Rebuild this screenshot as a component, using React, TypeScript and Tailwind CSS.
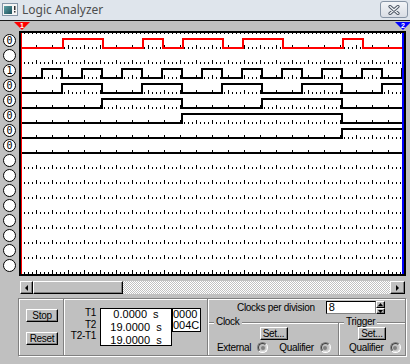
import React from 'react'

// edge positions in screen px, every signal starts low
const clock = Array.from({ length: 19 }, (_, i) => 42 + 20 * i)

const channels: { label: string; edges: number[] | null; color?: string }[] = [
  { label: '0', edges: [63, 103, 143, 163, 183, 223, 243, 283, 343, 363], color: '#ff0000' },
  { label: '', edges: null },
  { label: '1', edges: clock },
  { label: '0', edges: [62, 102, 142, 182, 222, 262, 302, 342, 382] },
  { label: '0', edges: [102, 182, 262, 342] },
  { label: '0', edges: [182, 342] },
  { label: '0', edges: [342] },
  { label: '0', edges: [] },
  ...Array.from({ length: 8 }, () => ({ label: '', edges: null })),
]

const W = 383
const H = 241

function wavePath(edges: number[], row: number) {
  const low = 15 + 15 * row
  const high = 6 + 15 * row
  let y = low
  let d = `M0 ${low}`
  for (const e of edges) {
    d += ` H${e - 21}`
    y = y === low ? high : low
    d += ` V${y}`
  }
  return d + ` H${W}`
}

const raised =
  'bg-[#c0c0c0] border border-t-white border-l-white border-r-black border-b-black shadow-[inset_-1px_-1px_0_#808080]'
const txt = "font-['Liberation_Sans',Arial,sans-serif] text-[10px] tracking-[-0.3px] text-black"

function Radio() {
  return (
    <div className="w-[11px] h-[11px] rounded-full border border-t-[#808080] border-l-[#808080] border-r-white border-b-white">
      <div className="w-full h-full rounded-full border border-t-[#404040] border-l-[#404040] border-r-[#dfdfdf] border-b-[#dfdfdf] bg-[#c0c0c0] flex items-center justify-center">
        <div className="w-[4px] h-[4px] rounded-full bg-[#808080]" />
      </div>
    </div>
  )
}

function Arrow({ dir }: { dir: 'left' | 'right' | 'up' | 'down' }) {
  const pts = {
    left: '3,0 3,6 0,3',
    right: '0,0 0,6 3,3',
    up: '0,3 5,3 2.5,0',
    down: '0,0 5,0 2.5,3',
  }[dir]
  const horiz = dir === 'left' || dir === 'right'
  return (
    <svg width={horiz ? 3 : 5} height={horiz ? 6 : 3} className="block">
      <polygon points={pts} fill="#000" />
    </svg>
  )
}

export default function App() {
  return (
    <div className="w-[410px] h-[364px] bg-[#c0c0c0] overflow-hidden">
      {/* Title bar */}
      <div className="h-[20px] bg-[#dfe5ec] flex items-center">
        <svg width={16} height={14} className="ml-[2px] block">
          <defs>
            <linearGradient id="ic" x1="0" y1="0" x2="1" y2="1">
              <stop offset="0" stopColor="#5fa3a8" />
              <stop offset="1" stopColor="#1d4f5a" />
            </linearGradient>
          </defs>
          <rect x={0.5} y={0.5} width={15} height={12} fill="#f5f5f5" stroke="#8495a6" />
          <rect x={2} y={3} width={8} height={8} fill="url(#ic)" />
          <rect x={12} y={3} width={1.5} height={4} fill="#333" />
          <rect x={12} y={8} width={1.5} height={1.5} fill="#333" />
        </svg>
        <span className="ml-[4px] font-['Noto_Sans',sans-serif] text-[12px] text-[#4d4d4d]">Logic Analyzer</span>
        <div className="ml-auto mr-[2px] self-start mt-[1px] w-[28px] h-[17px] rounded-[3px] border border-[#8694a5] bg-[linear-gradient(#f2f4f7,#d9dee5)] flex items-center justify-center">
          <svg width={12} height={10} className="block">
            <path d="M2 1.5 L10 8.5 M10 1.5 L2 8.5" stroke="#4a5462" strokeWidth={3.2} strokeLinecap="round" />
            <path d="M2 1.5 L10 8.5 M10 1.5 L2 8.5" stroke="#f4f6f8" strokeWidth={1.3} strokeLinecap="round" />
          </svg>
        </div>
      </div>
      <div className="h-[1px] bg-[#1a1a1a]" />

      {/* cursor markers */}
      <svg width={410} height={10} className="block">
        <polygon points="14,1 30,1 22,9" fill="#ff0000" />
        <text x={22} y={7} fontSize={7} fontWeight="bold" fill="#fff" textAnchor="middle" fontFamily="Liberation Sans, sans-serif">
          1
        </text>
        <polygon points="395,1 411,1 403,9" fill="#0000ff" />
        <text x={403} y={7} fontSize={7} fontWeight="bold" fill="#fff" textAnchor="middle" fontFamily="Liberation Sans, sans-serif">
          2
        </text>
      </svg>

      {/* channels + display */}
      <div className="flex">
        <div className="w-[19px] pt-[2px]">
          {channels.map((c, i) => (
            <div key={i} className="h-[15px] flex items-center">
              <div className="ml-[3px] w-[13px] h-[13px] rounded-full border border-black bg-white flex items-center justify-center text-[10px] leading-none font-['DejaVu_Sans_Mono',monospace]">
                {c.label}
              </div>
            </div>
          ))}
        </div>
        <div className="w-[387px] h-[245px] border-2 border-black bg-white">
          <svg width={W} height={H} className="block" shapeRendering="crispEdges">
            <defs>
              <pattern id="ticks" x={-1} y={1} width={16} height={15} patternUnits="userSpaceOnUse">
                <rect x={0} y={11} width={1} height={4} fill="#000" />
                <rect x={4} y={13} width={1} height={2} fill="#000" />
                <rect x={8} y={13} width={1} height={2} fill="#000" />
                <rect x={12} y={13} width={1} height={2} fill="#000" />
              </pattern>
            </defs>
            <rect width={W} height={H} fill="url(#ticks)" />
            {channels.map((c, i) =>
              c.edges ? (
                <path key={i} d={wavePath(c.edges, i)} fill="none" stroke={c.color ?? '#000'} strokeWidth={2} />
              ) : null
            )}
            <rect x={0} y={0} width={1} height={H} fill="#ff0000" />
            <rect x={W - 2} y={0} width={2} height={H} fill="#0000ff" />
          </svg>
        </div>
      </div>

      {/* scrollbar */}
      <div className="ml-[20px] mt-[5px] w-[385px] h-[13px] flex">
        <div className={`${raised} w-[13px] flex items-center justify-center`}>
          <Arrow dir="left" />
        </div>
        <div className={`${raised} w-[90px]`} />
        <div className="flex-1 bg-[image:repeating-conic-gradient(#fff_0_25%,#c0c0c0_0_50%)] bg-[length:2px_2px]" />
        <div className={`${raised} w-[15px] flex items-center justify-center`}>
          <Arrow dir="right" />
        </div>
      </div>

      {/* control panel */}
      <div className="ml-[18px] mt-[4px] w-[388px] h-[58px] border border-[#808080] shadow-[inset_1px_1px_0_#fff,1px_1px_0_#fff] flex">
        <div className="w-[44px] pl-[7px] pt-[10px] flex flex-col gap-[10px]">
          <div className={`${raised} ${txt} w-[32px] h-[13px] flex items-center justify-center`}>Stop</div>
          <div className={`${raised} ${txt} w-[32px] h-[13px] flex items-center justify-center`}>Reset</div>
        </div>
        <div className="w-[2px] border-l border-l-[#808080] bg-white" />

        <div className="w-[142px] flex items-start pt-[9px]">
          <div className={`${txt} w-[31px] -mt-[1px] text-right leading-[11.5px]`}>
            <div>T1</div>
            <div>T2</div>
            <div>T2-T1</div>
          </div>
          <div className="ml-[4px] w-[72px] h-[38px] border border-black bg-white font-['Liberation_Sans',Arial,sans-serif] text-[11px] text-center whitespace-pre">
            <div className="h-[13px] leading-[11px]">0.0000  s</div>
            <div className="h-[13px] leading-[11px]">19.0000  s</div>
            <div className="h-[13px] leading-[11px]">19.0000  s</div>
          </div>
          <div className="w-[29px] h-[24px] border border-black bg-white font-['Liberation_Sans',Arial,sans-serif] text-[11px] leading-[11px] pl-[0px]">
            <div>0000</div>
            <div>004C</div>
          </div>
        </div>
        <div className="w-[2px] border-l border-l-[#808080] bg-white" />

        <div className="flex-1 flex flex-col pt-[2px]">
          <div className="h-[13px] flex items-center">
            <span className={`${txt} ml-[28px]`}>Clocks per division</span>
            <div className={`ml-[11px] w-[50px] h-[13px] bg-white border border-t-black border-l-black border-r-[#808080] border-b-[#808080] ${txt} text-[11px] leading-[11px] pl-[2px]`}>
              8
            </div>
            <div className="w-[9px] h-[13px] flex flex-col">
              <div className={`${raised} h-[7px] flex items-center justify-center`}>
                <Arrow dir="up" />
              </div>
              <div className={`${raised} h-[6px] flex items-center justify-center`}>
                <Arrow dir="down" />
              </div>
            </div>
          </div>

          <div className="mt-[8px] flex-1 flex">
            <div className="w-[129px] border-t border-t-[#808080] shadow-[inset_0_1px_0_#fff] flex flex-col">
              <div className={`${txt} -mt-[6px] ml-[5px] px-[2px] w-fit h-[10px] leading-[10px] bg-[#c0c0c0]`}>Clock</div>
              <div className={`${raised} ${txt} mx-auto w-[28px] h-[13px] flex items-center justify-center`}>Set...</div>
              <div className="mt-[2px] h-[11px] flex items-center">
                <span className={`${txt} ml-[8px]`}>External</span>
                <div className="ml-[6px]">
                  <Radio />
                </div>
                <span className={`${txt} ml-[11px]`}>Qualifier</span>
                <div className="ml-[6px]">
                  <Radio />
                </div>
              </div>
            </div>
            <div className="flex-1 border-t border-l border-[#808080] shadow-[inset_1px_1px_0_#fff] flex flex-col">
              <div className={`${txt} -mt-[6px] ml-[5px] px-[2px] w-fit h-[10px] leading-[10px] bg-[#c0c0c0]`}>Trigger</div>
              <div className={`${raised} ${txt} mx-auto w-[28px] h-[13px] flex items-center justify-center`}>Set...</div>
              <div className="mt-[2px] h-[11px] flex items-center">
                <span className={`${txt} ml-[10px]`}>Qualifier</span>
                <div className="ml-[6px]">
                  <Radio />
                </div>
              </div>
            </div>
          </div>
        </div>
      </div>
    </div>
  )
}
